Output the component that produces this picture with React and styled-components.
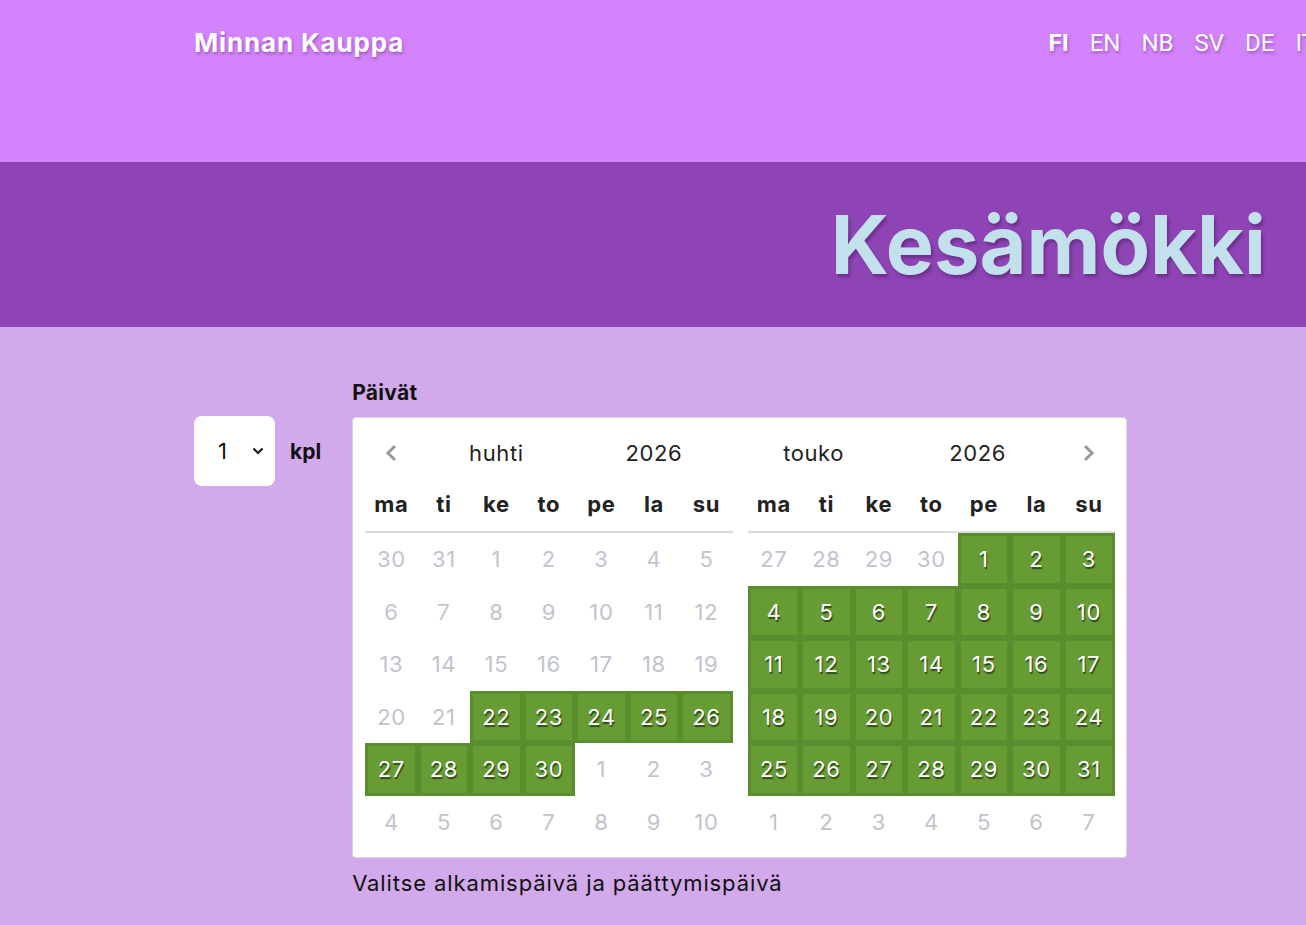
import React from 'react';
import styled, { createGlobalStyle } from 'styled-components';

const GlobalStyle = createGlobalStyle`
  html, body {
    margin: 0;
    padding: 0;
    background: #d2a9eb;
    font-family: "Inter", "Noto Sans", sans-serif;
    overflow: hidden;
  }
`;

const Page = styled.div`
  width: 1306px;
  min-height: 925px;
  background: #d2a9eb;
`;

const TopBar = styled.header`
  height: 162px;
  background: #d383fc;
  display: flex;
  align-items: flex-start;
  justify-content: space-between;
  padding: 0 0 0 194px;
  box-sizing: border-box;
  overflow: hidden;
`;

const Brand = styled.div`
  margin-top: 27px;
  font-family: "Inter", sans-serif;
  font-weight: 700;
  font-size: 26px;
  letter-spacing: 0.85px;
  color: #fff;
  text-shadow: 1px 2px 3px rgba(120, 50, 150, 0.55);
`;

// the language list runs past the right edge of the bar
const Langs = styled.nav`
  display: flex;
  gap: 21px;
  margin-top: 29px;
  margin-right: -10px;
`;

const Lang = styled.span`
  font-family: "Roboto", sans-serif;
  font-size: 24px;
  font-weight: ${(p) => (p.$active ? 700 : 400)};
  color: #fff;
  text-shadow: 1px 2px 3px rgba(120, 50, 150, 0.55);
`;

const Band = styled.div`
  height: 165px;
  background: #8e44b4;
  display: flex;
  align-items: center;
  justify-content: flex-end;
  padding-right: 40px;
`;

const Title = styled.h1`
  margin: 0;
  font-family: "Inter", sans-serif;
  font-weight: 700;
  font-size: 81px;
  letter-spacing: 0;
  color: #c2e1ed;
  text-shadow: 2px 3px 3px rgba(70, 20, 100, 0.45);
`;

const Content = styled.main`
  display: flex;
  gap: 31px;
  padding: 53px 0 0 194px;
`;

const QtyGroup = styled.div`
  display: flex;
  align-items: center;
  gap: 15px;
  margin-top: 36px;
  height: 70px;
`;

const QtySelect = styled.div`
  width: 81px;
  height: 70px;
  background: #fff;
  border-radius: 8px;
  display: flex;
  align-items: center;
  justify-content: space-between;
  padding: 0 11px 0 24px;
  box-sizing: border-box;
  font-size: 22px;
  color: #111;
`;

const Unit = styled.span`
  font-weight: 700;
  font-size: 21px;
  color: #111;
`;

const DatesGroup = styled.div`
  display: flex;
  flex-direction: column;
`;

const Label = styled.div`
  font-weight: 700;
  font-size: 21px;
  letter-spacing: 0.3px;
  color: #111;
  margin-bottom: 12px;
`;

const Calendar = styled.div`
  width: 775px;
  height: 441px;
  box-sizing: border-box;
  background: #fff;
  border: 1px solid #d8d8d8;
  border-radius: 4px;
  display: flex;
  gap: 15px;
  padding: 12px 12px 0 12px;
`;

const Month = styled.div`
  width: 367.5px;
`;

const MonthHead = styled.div`
  height: 46px;
  display: grid;
  grid-template-columns: ${(p) => p.$cols};
  align-items: center;
  font-size: 22px;
  letter-spacing: 0.6px;
  color: #222;
`;

const HeadCell = styled.span`
  text-align: center;
`;

const Arrow = styled.svg`
  justify-self: center;
  width: 14px;
  height: 18px;
`;

const Weekdays = styled.div`
  display: grid;
  grid-template-columns: repeat(7, 52.5px);
  height: 55px;
  align-items: center;
  border-bottom: 2px solid #dcdcdc;
`;

const Weekday = styled.span`
  text-align: center;
  font-weight: 700;
  font-size: 22px;
  letter-spacing: 0.6px;
  color: #222;
`;

const Days = styled.div`
  display: grid;
  grid-template-columns: repeat(7, 52.5px);
  grid-auto-rows: 52.5px;
`;

const Day = styled.div`
  display: flex;
  align-items: center;
  justify-content: center;
  box-sizing: border-box;
  font-size: 22px;
  letter-spacing: 0.6px;
  color: ${(p) => (p.$selected ? '#fff' : '#c1c4cd')};
  background: ${(p) => (p.$selected ? '#679c35' : 'transparent')};
  border: 3px solid ${(p) => (p.$selected ? '#5a8d2d' : 'transparent')};
  text-shadow: ${(p) => (p.$selected ? '1px 2px 1px rgba(0, 0, 0, 0.55)' : 'none')};
`;

const Hint = styled.div`
  margin-top: 12px;
  font-size: 22px;
  letter-spacing: 0.9px;
  color: #111;
`;

const weekdayNames = ['ma', 'ti', 'ke', 'to', 'pe', 'la', 'su'];

// 6 rows starting on Monday, for the given year/month (0-based)
const buildDays = (year, month) => {
  const first = new Date(year, month, 1);
  const offset = (first.getDay() + 6) % 7;
  const start = new Date(year, month, 1 - offset);
  return Array.from({ length: 42 }, (_, i) => {
    const d = new Date(start.getFullYear(), start.getMonth(), start.getDate() + i);
    return { date: d, inMonth: d.getMonth() === month };
  });
};

const rangeStart = new Date(2026, 3, 22);
const rangeEnd = new Date(2026, 4, 31);

const isSelected = (d) => d >= rangeStart && d <= rangeEnd;

const Chevron = ({ dir }) => (
  <Arrow viewBox="0 0 14 18">
    <path
      d={dir === 'left' ? 'M11 2 L4 9 L11 16' : 'M3 2 L10 9 L3 16'}
      fill="none"
      stroke="#9a9a9a"
      strokeWidth="3"
    />
  </Arrow>
);

const MonthView = ({ name, year, month, prev, next }) => (
  <Month>
    <MonthHead $cols={prev ? '52.5px 157.5px 157.5px' : '132px 196px 26px'}>
      {prev && <Chevron dir="left" />}
      <HeadCell>{name}</HeadCell>
      <HeadCell>{year}</HeadCell>
      {next && <Chevron dir="right" />}
    </MonthHead>
    <Weekdays>
      {weekdayNames.map((w) => (
        <Weekday key={w}>{w}</Weekday>
      ))}
    </Weekdays>
    <Days>
      {buildDays(year, month).map(({ date, inMonth }, i) => (
        <Day key={i} $selected={inMonth && isSelected(date)}>
          {date.getDate()}
        </Day>
      ))}
    </Days>
  </Month>
);

const App = () => (
  <Page>
    <GlobalStyle />
    <TopBar>
      <Brand>Minnan Kauppa</Brand>
      <Langs>
        <Lang $active>FI</Lang>
        <Lang>EN</Lang>
        <Lang>NB</Lang>
        <Lang>SV</Lang>
        <Lang>DE</Lang>
        <Lang>IT</Lang>
      </Langs>
    </TopBar>
    <Band>
      <Title>Kesämökki</Title>
    </Band>
    <Content>
      <QtyGroup>
        <QtySelect>
          <span>1</span>
          <svg width="12" height="8" viewBox="0 0 12 8">
            <path d="M1.5 1.5 L6 6 L10.5 1.5" fill="none" stroke="#111" strokeWidth="2" />
          </svg>
        </QtySelect>
        <Unit>kpl</Unit>
      </QtyGroup>
      <DatesGroup>
        <Label>Päivät</Label>
        <Calendar>
          <MonthView name="huhti" year={2026} month={3} prev />
          <MonthView name="touko" year={2026} month={4} next />
        </Calendar>
        <Hint>Valitse alkamispäivä ja päättymispäivä</Hint>
      </DatesGroup>
    </Content>
  </Page>
);

export default App;
